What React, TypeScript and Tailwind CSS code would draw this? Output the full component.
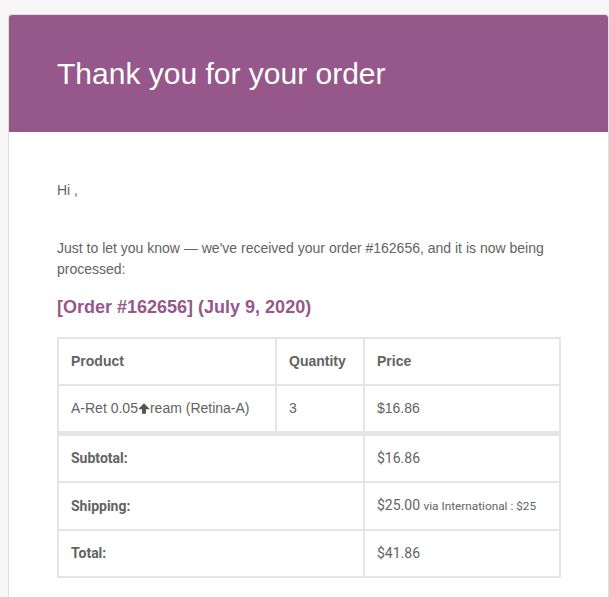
import React from "react";

const arial = { fontFamily: '"Liberation Sans", Arial, Helvetica, sans-serif' };

function Glyph() {
  return (
    <svg width="12" height="11" viewBox="0 0 12 11" className="inline-block align-[-1px]">
      <path d="M6 0.3 L11.8 6.2 L8 6.2 L8 10.8 L4 10.8 L4 6.2 L0.2 6.2 Z" fill="#555555" />
    </svg>
  );
}

export default function App() {
  return (
    <div className="h-[597px] w-[609px] overflow-hidden bg-[#f7f7f7] pt-[14px]" style={arial}>
      <div className="ml-[8px] h-[600px] w-[601px] rounded-[3px] border border-[#dedede] bg-white">
        <div className="flex h-[117px] items-center rounded-t-[3px] bg-[#96588a] px-[48px]">
          <h1 className="text-[30px] leading-[45px] text-white">Thank you for your order</h1>
        </div>
        <div className="px-[48px] pt-[48px] text-[14px] leading-[21px] text-[#636363]">
          <p className="mb-[37px]">Hi ,</p>
          <p className="mb-[16px]">
            Just to let you know — we've received your order #162656, and it is now being
            <br />
            processed:
          </p>
          <h2 className="mb-[18px] text-[18px] font-bold leading-[23px] text-[#96588a]">
            [Order #162656] (July 9, 2020)
          </h2>
          <table className="w-[504px] border-separate border-spacing-0 border border-[#e5e5e5] text-left text-[14px] text-[#636363]">
            <thead>
              <tr>
                <th className="w-[218px] border border-[#e5e5e5] p-[12px] font-bold leading-[21px]">Product</th>
                <th className="w-[88px] border border-[#e5e5e5] p-[12px] font-bold leading-[21px]">Quantity</th>
                <th className="border border-[#e5e5e5] p-[12px] font-bold leading-[21px]">Price</th>
              </tr>
            </thead>
            <tbody>
              <tr>
                <td className="border border-[#e5e5e5] p-[12px] leading-[21px]">
                  A-Ret 0.05<Glyph />ream (Retina-A)
                </td>
                <td className="border border-[#e5e5e5] p-[12px] leading-[21px]">3</td>
                <td className="border border-[#e5e5e5] p-[12px] leading-[21px]">$16.86</td>
              </tr>
            </tbody>
            <tfoot style={{ fontFamily: 'Roboto, "Liberation Sans", Arial, sans-serif' }}>
              <tr>
                <th colSpan={2} className="border border-t-4 border-[#e5e5e5] p-[12px] font-bold leading-[21px]">
                  Subtotal:
                </th>
                <td className="border border-t-4 border-[#e5e5e5] p-[12px] leading-[21px]">$16.86</td>
              </tr>
              <tr>
                <th colSpan={2} className="border border-[#e5e5e5] p-[12px] font-bold leading-[21px]">
                  Shipping:
                </th>
                <td className="border border-[#e5e5e5] p-[12px] leading-[21px]">
                  $25.00 <span className="text-[11.8px]">via International : $25</span>
                </td>
              </tr>
              <tr>
                <th colSpan={2} className="border border-[#e5e5e5] p-[12px] font-bold leading-[21px]">
                  Total:
                </th>
                <td className="border border-[#e5e5e5] p-[12px] leading-[21px]">$41.86</td>
              </tr>
            </tfoot>
          </table>
        </div>
      </div>
    </div>
  );
}
